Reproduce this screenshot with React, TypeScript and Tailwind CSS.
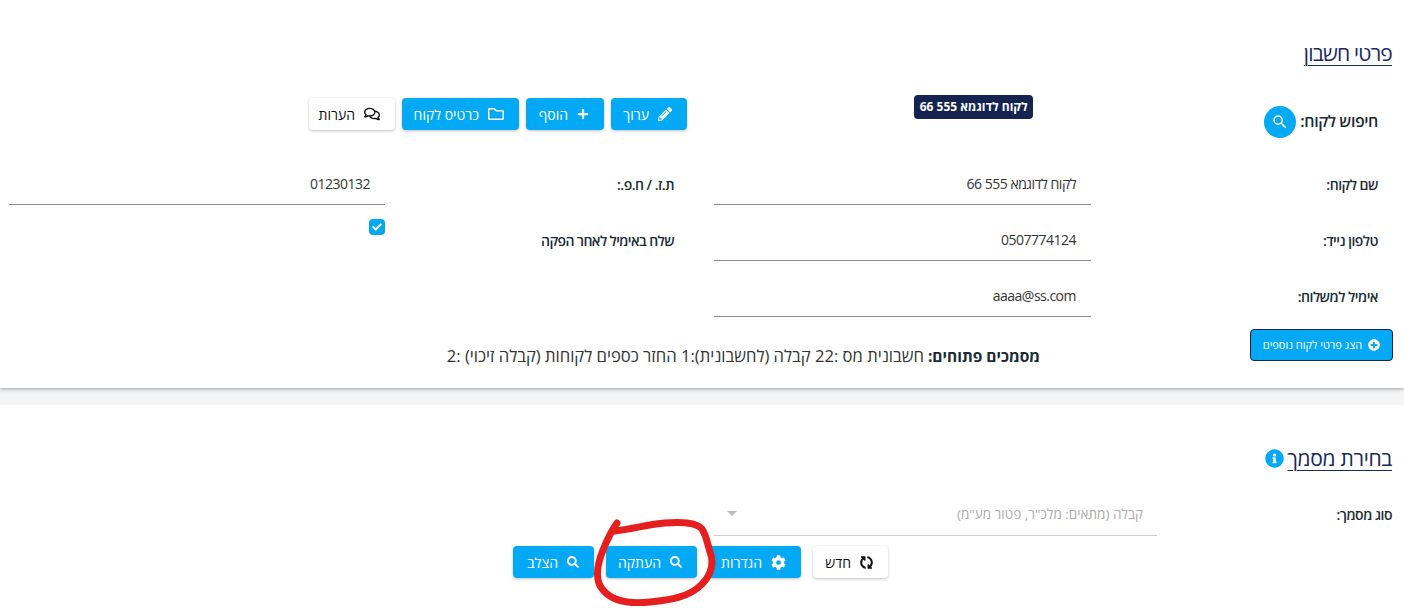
import React from 'react';
import { FaPencilAlt, FaPlus, FaRegFolder, FaRegComments, FaSearch, FaCog, FaSyncAlt, FaPlusCircle, FaInfoCircle, FaCheck } from 'react-icons/fa';
import { MdSearch } from 'react-icons/md';

const ActionButton: React.FC<{ icon: React.ReactNode; label: string; width: string; light?: boolean }> = ({ icon, label, width, light }) => (
    <button
        className={`${width} h-8 rounded flex items-center pr-[15px] gap-[9px] text-[14px] shadow-[0_1px_3px_rgba(0,0,0,0.25)] ${light ? 'bg-white text-[#111]' : 'bg-[#03a9f4] text-white'}`}
    >
        {icon}
        {label}
    </button>
);

const Field: React.FC<{ label: string; value: string; labelPad: string }> = ({ label, value, labelPad }) => (
    <>
        <div className={`h-14 flex items-center pt-[14px] ${labelPad} font-semibold text-sm tracking-[-0.5px] text-[#1c2b33]`}>{label}</div>
        <div className="h-14 pt-[5px] pb-[1px]">
            <div className="h-[50px] pt-2 border-b border-[#8a8a8a] flex items-center pr-[15px] text-sm tracking-[-0.5px] text-[#333]">{value}</div>
        </div>
    </>
);

export default function App() {
    return (
        <div dir="rtl" className="relative w-[1404px] h-[608px] overflow-hidden bg-[#f4f5f7] font-['Open_Sans','Noto_Sans',sans-serif]">
            <section className="h-[388px] bg-white shadow-[0_1px_4px_rgba(0,0,0,0.35)] pt-10 pr-3 pl-[9px]">
                <h2 className="text-[21px] leading-[26px] tracking-[-0.8px] text-[#1a2a5a] underline underline-offset-4 decoration-1">פרטי חשבון</h2>

                <div className="flex h-[72px] mt-[2px]">
                    <div className="w-[300px] flex items-center pr-[14px] gap-[4px] pt-9">
                        <span className="text-base tracking-[-0.4px] font-semibold text-[#1c2b33] text-nowrap -mt-[3px]">חיפוש לקוח:</span>
                        <span className="w-8 h-8 rounded-full bg-[#03a9f4] text-white flex items-center justify-center">
                            <MdSearch className="text-lg" />
                        </span>
                    </div>
                    <div className="w-[378px] pt-[25px] pr-[59px]">
                        <span className="inline-block h-6 leading-6 px-[5.5px] rounded bg-[#14234f] text-white text-xs font-bold text-nowrap">לקוח לדוגמא 555 66</span>
                    </div>
                    <div className="flex gap-[7px] pt-[30px] items-start pr-[27px]">
                        <ActionButton icon={<FaPencilAlt className="text-sm" />} label="ערוך" width="w-[76px]" />
                        <ActionButton icon={<FaPlus className="text-xs" />} label="הוסף" width="w-[78px]" />
                        <ActionButton icon={<FaRegFolder className="text-base" />} label="כרטיס לקוח" width="w-[117px]" />
                        <ActionButton icon={<FaRegComments className="text-base" />} label="הערות" width="w-[86px]" light />
                    </div>
                </div>

                <div className="grid grid-cols-[301px_377px_329px_376px] mt-[10px]">
                    <Field label="שם לקוח:" value="לקוח לדוגמא 555 66" labelPad="pr-[14px]" />
                    <Field label="ת.ז. / ח.פ.:" value="01230132" labelPad="pr-10" />
                    <Field label="טלפון נייד:" value="0507774124" labelPad="pr-[14px]" />
                    <div className="h-14 flex items-center pr-10 pt-[14px] font-semibold text-sm tracking-[-0.6px] text-[#1c2b33] text-nowrap">שלח באימיל לאחר הפקה</div>
                    <div className="h-14 pt-[13px]">
                        <span className="w-4 h-4 rounded-sm bg-[#03a9f4] text-white flex items-center justify-center text-[10px]">
                            <FaCheck />
                        </span>
                    </div>
                    <Field label="אימיל למשלוח:" value="aaaa@ss.com" labelPad="pr-[14px]" />
                </div>

                <div className="flex items-start mt-[11px]">
                    <button className="w-[143px] h-8 rounded border border-[#14234f] bg-[#03a9f4] text-white text-[11px] font-medium flex items-center justify-center gap-[6px] -mr-[1px]">
                        <FaPlusCircle className="text-xs" />
                        הצג פרטי לקוח נוספים
                    </button>
                    <div className="mr-[210px] pt-[13px] text-[16.6px] leading-7 text-[#333] text-nowrap">
                        <span className="font-bold text-[15.5px] text-[#1c2b33]">מסמכים פתוחים: </span>
                        חשבונית מס :22 קבלה (לחשבונית):1 החזר כספים לקוחות (קבלה זיכוי) :2
                    </div>
                </div>
            </section>

            <section className="absolute top-[405px] inset-x-0 h-[203px] bg-white pt-10 pr-3">
                <h2 className="flex items-center gap-1 text-[21px] leading-[26px] tracking-[-0.3px] text-[#1a2a5a]">
                    <span className="underline underline-offset-4 decoration-1">בחירת מסמך</span>
                    <FaInfoCircle className="text-[#03a9f4] text-[19px]" />
                </h2>
                <div className="flex mt-[27px] h-[38px]">
                    <div className="w-[235px] pt-[7px] font-semibold text-sm tracking-[-0.5px] text-[#1c2b33]">סוג מסמך:</div>
                    <div className="w-[443px] border-b border-[#ccc] flex items-center pr-[14px] pb-1 text-[13.5px] text-[#aaa] text-nowrap">
                        קבלה (מתאים: מלכ"ר, פטור מע"מ)
                    </div>
                </div>
                <div className="flex gap-3 mt-[10px] pr-[504px]">
                    <ActionButton icon={<FaSyncAlt className="text-[13px] rotate-90" />} label="חדש" width="w-[75px]" light />
                    <ActionButton icon={<FaCog className="text-[15px]" />} label="הגדרות" width="w-[92px]" />
                    <ActionButton icon={<FaSearch className="text-xs" />} label="העתקה" width="w-[91px]" />
                    <ActionButton icon={<FaSearch className="text-xs" />} label="הצלב" width="w-[81px]" />
                </div>
            </section>

            {/* select arrow */}
            <span className="absolute left-[727px] top-[511px] w-0 h-0 border-x-[5px] border-x-transparent border-t-[5px] border-t-[#bbb]" />

            {/* hand drawn red circle over the copy button */}
            <svg className="absolute inset-0 pointer-events-none" width="1404" height="608" fill="none">
                <path
                    d="M617 523 C612 530 607 540 603 550 C597 565 594 580 603 590 C612 601 630 604 650 602 C670 600 690 597 702 584 C712 574 714 562 710 552 C707 542 706 535 702 529 C696 522 680 522 665 523 C650 524 632 529 615 531"
                    stroke="#e61e1e"
                    strokeWidth="7"
                    strokeLinecap="round"
                />
            </svg>
        </div>
    );
}
